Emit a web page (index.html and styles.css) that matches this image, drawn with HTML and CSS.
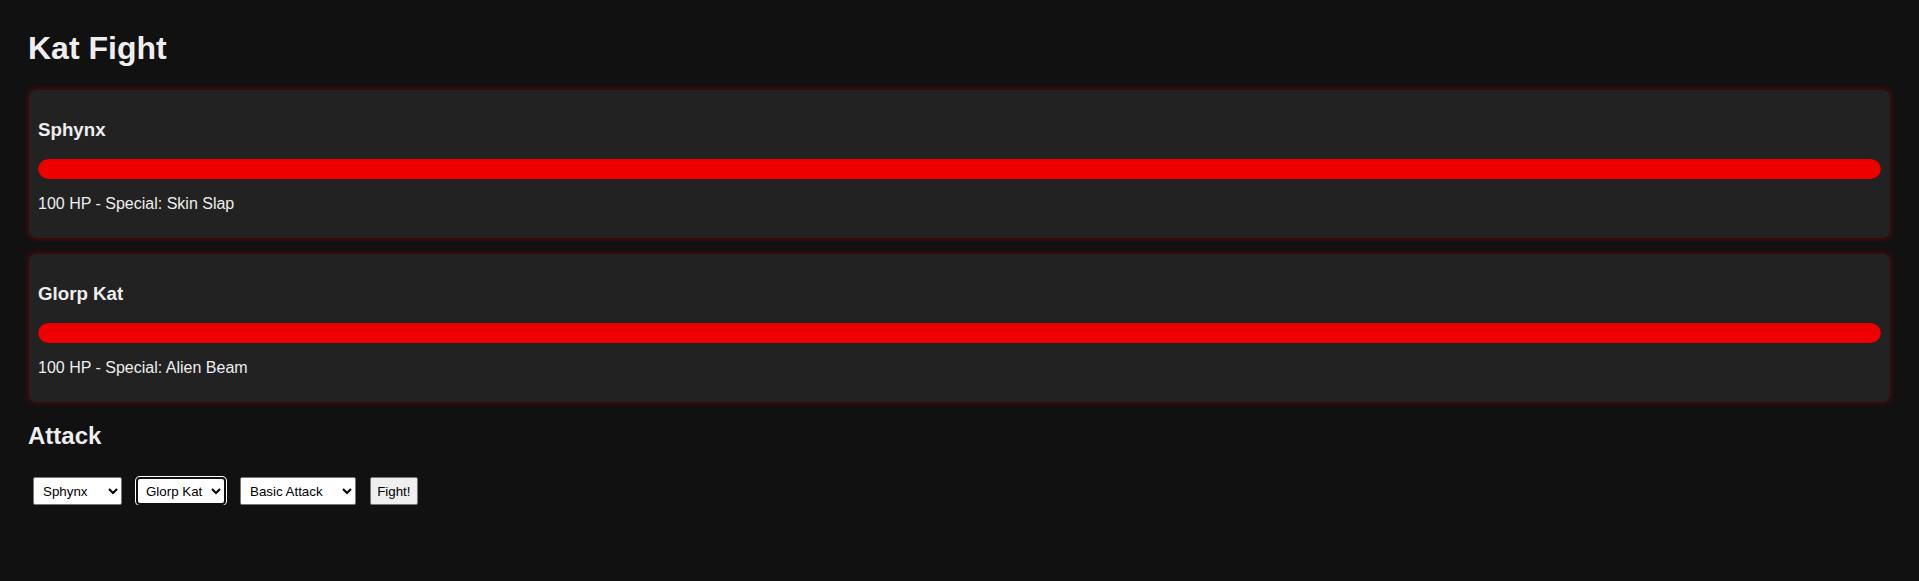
FILE: index.html
```html
<!DOCTYPE html>
<html lang="en">
<head>
<meta charset="utf-8">
<title>Kat Fight</title>
<link rel="stylesheet" href="styles.css">
</head>
<body>
<div class="app">
  <h1 class="title">Kat Fight</h1>

  <section class="card">
    <h3 class="card-name">Sphynx</h3>
    <div class="hp-track"><div class="hp-bar" style="width:100%"></div></div>
    <p class="card-info">100 HP - Special: Skin Slap</p>
  </section>

  <section class="card">
    <h3 class="card-name">Glorp Kat</h3>
    <div class="hp-track"><div class="hp-bar" style="width:100%"></div></div>
    <p class="card-info">100 HP - Special: Alien Beam</p>
  </section>

  <h2 class="section-title">Attack</h2>

  <div class="controls">
    <select class="picker picker-cat">
      <option selected>Sphynx</option>
      <option>Glorp Kat</option>
    </select>
    <select class="picker picker-cat is-focused">
      <option>Sphynx</option>
      <option selected>Glorp Kat</option>
    </select>
    <select class="picker picker-move">
      <option selected>Basic Attack</option>
      <option>Special Attack</option>
    </select>
    <button class="fight-btn" type="button">Fight!</button>
  </div>
</div>
</body>
</html>
```

FILE: styles.css
```css
html, body {
  margin: 0;
  padding: 0;
  background: #111111;
}

body {
  color: #eeeeee;
  font-family: "Liberation Sans", Arial, sans-serif;
  font-size: 16px;
}

.app {
  padding: 0 28px;
}

.title {
  margin: 29.5px 0 22.7px;
  font-size: 32px;
  font-weight: bold;
  line-height: 36.8px;
}

.card {
  background: #222222;
  border: 1px solid #3c0606;
  border-radius: 8px;
  box-shadow: 0 0 5px rgba(255, 0, 0, 0.28);
  padding: 10px 9px 9px 9px;
  margin-bottom: 14px;
}

.card-name {
  margin: 18.72px 0;
  font-size: 18.72px;
  font-weight: bold;
  line-height: 21.5px;
}

.hp-track {
  height: 20px;
  border-radius: 10px;
  overflow: hidden;
}

.hp-bar {
  height: 100%;
  background: #ee0000;
  border-radius: 10px;
}

.card-info {
  margin: 15.8px 0 16px;
  line-height: 18.4px;
}

.section-title {
  margin: 19px 0 0;
  font-size: 24px;
  font-weight: bold;
  line-height: 27.6px;
}

.controls {
  display: flex;
  align-items: flex-start;
  gap: 14px;
  padding: 0 5px;
  margin-top: 27.5px;
}

.picker {
  font-family: "Liberation Sans", Arial, sans-serif;
  font-size: 13.33px;
  color: #000000;
  background-color: #ffffff;
  border: 1px solid #767676;
  border-radius: 2px;
  padding: 5px 5px;
  height: 28px;
  margin: 0;
}

.picker-cat {
  width: 89px;
}

.picker-move {
  width: 116px;
}

.picker.is-focused {
  width: 90px;
  border: 2px solid #101010;
  box-shadow: 0 0 0 1px #ffffff;
  border-radius: 4px;
  padding: 4px 4px;
  outline: none;
}

.fight-btn {
  font-family: "Liberation Sans", Arial, sans-serif;
  font-size: 13.33px;
  color: #000000;
  background: #efefef;
  border: 1px solid #767676;
  border-radius: 2px;
  padding: 0 6px;
  width: 47.6px;
  height: 28px;
  margin: 0;
}
```
